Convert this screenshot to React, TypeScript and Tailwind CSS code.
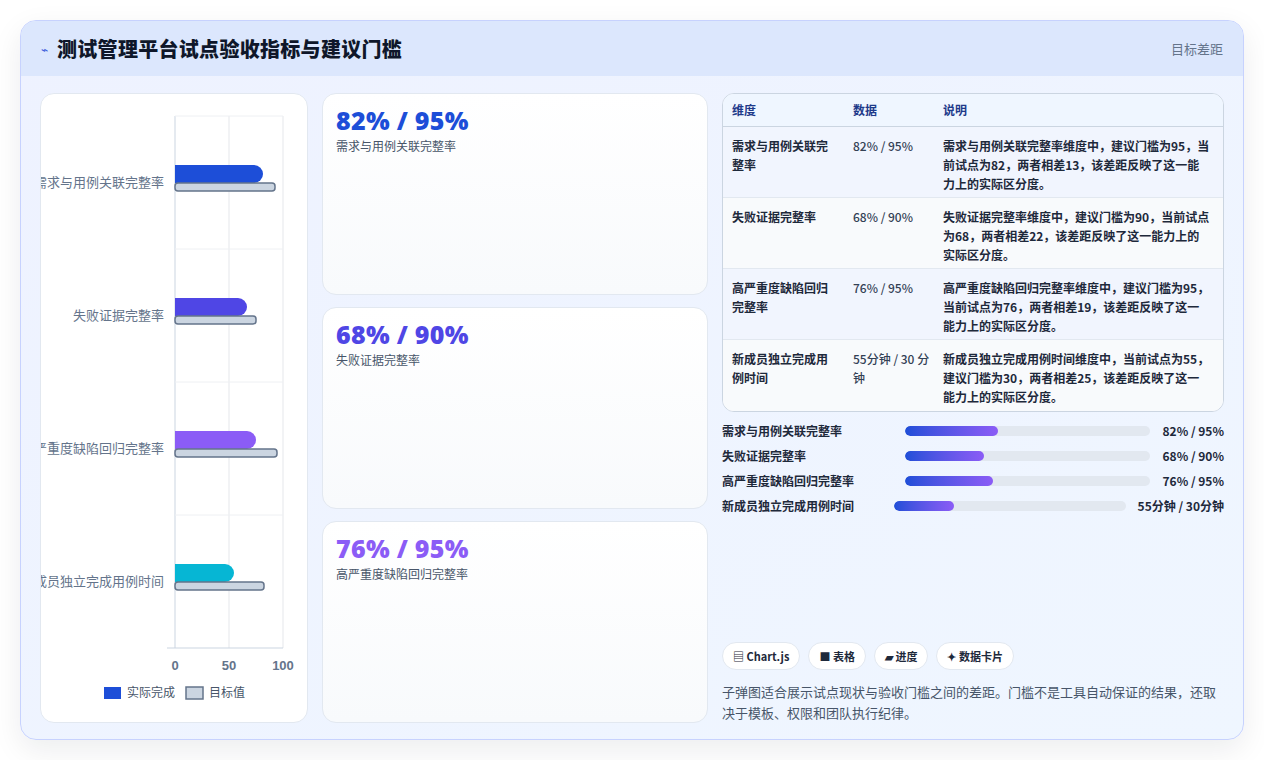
export default function App() {
  const f = { fontFamily: '"Noto Sans CJK SC","Noto Sans",sans-serif' };
  const cards = [
    { v: "82% / 95%", l: "需求与用例关联完整率", c: "text-[#1d4ed8]" },
    { v: "68% / 90%", l: "失败证据完整率", c: "text-[#4f46e5]" },
    { v: "76% / 95%", l: "高严重度缺陷回归完整率", c: "text-[#8b5cf6]" },
  ];
  const rows = [
    ["需求与用例关联完整率", "82% / 95%", "需求与用例关联完整率维度中，建议门槛为95，当前试点为82，两者相差13，该差距反映了这一能力上的实际区分度。"],
    ["失败证据完整率", "68% / 90%", "失败证据完整率维度中，建议门槛为90，当前试点为68，两者相差22，该差距反映了这一能力上的实际区分度。"],
    ["高严重度缺陷回归完整率", "76% / 95%", "高严重度缺陷回归完整率维度中，建议门槛为95，当前试点为76，两者相差19，该差距反映了这一能力上的实际区分度。"],
    ["新成员独立完成用例时间", "55分钟 / 30 分钟", "新成员独立完成用例时间维度中，当前试点为55，建议门槛为30，两者相差25，该差距反映了这一能力上的实际区分度。"],
  ];
  const prog = [
    ["需求与用例关联完整率", "82% / 95%", 38, "w-[171px]"],
    ["失败证据完整率", "68% / 90%", 32, "w-[171px]"],
    ["高严重度缺陷回归完整率", "76% / 95%", 36, "w-[171px]"],
    ["新成员独立完成用例时间", "55分钟 / 30分钟", 26, "w-[160px]"],
  ] as const;
  const bars = [
    { l: "需求与用例关联完整率", a: 262, t: 274, c: "#1d4ed8" },
    { l: "失败证据完整率", a: 246, t: 255, c: "#4f46e5" },
    { l: "高严重度缺陷回归完整率", a: 255, t: 276, c: "#8b5cf6" },
    { l: "新成员独立完成用例时间", a: 233, t: 263, c: "#06b6d4" },
  ];
  const ox = 40, oy = 93;
  return (
    <div className="w-[1264px] h-[760px] bg-white p-[20px] pr-[20px]" style={f}>
      <div className="w-[1224px] h-[720px] rounded-[16px] border border-[#c7d2fe] bg-gradient-to-br from-[#eef2ff] to-[#eff6ff] shadow-[0_10px_30px_rgba(15,23,42,0.08)] overflow-hidden flex flex-col">
        <div className="h-[55px] shrink-0 bg-[#dce7fd] flex items-center px-[20px] justify-between">
          <div className="flex items-center gap-[9px]">
            <span className="text-[#3b5bdb] text-[12px]">⌁</span>
            <span className="text-[20px] font-black text-[#0f172a] tracking-[0.3px]">测试管理平台试点验收指标与建议门槛</span>
          </div>
          <span className="text-[13px] text-[#64748b]">目标差距</span>
        </div>
        <div className="flex-1 flex gap-[14px] px-[19px] pt-[17px] pb-[18px]">
          <div className="w-[268px] shrink-0 bg-white rounded-[14px] border border-[#e2e8f0] overflow-hidden">
            <svg width="268" height="628" viewBox={`${ox} ${oy} 268 628`}>
              {[174, 228, 282].map((x) => (
                <line key={x} x1={x} x2={x} y1={115} y2={647} stroke={x === 174 ? "#cbd5e1" : "#e5e7eb"} />
              ))}
              {[115, 248, 381, 514].map((y) => (
                <line key={y} x1={174} x2={282} y1={y} y2={y} stroke="#eef0f3" />
              ))}
              <line x1={166} x2={282} y1={647} y2={647} stroke="#cbd5e1" />
              {bars.map((b, i) => {
                const cy = 181 + i * 133;
                return (
                  <g key={i}>
                    <text x={163} y={cy + 5} textAnchor="end" fontSize="13" fill="#64748b" style={f}>{b.l}</text>
                    <path d={`M174 ${cy - 17} H${b.a - 9} A9 9 0 0 1 ${b.a} ${cy - 8} A9 9 0 0 1 ${b.a - 9} ${cy + 1} H174 Z`} fill={b.c} />
                    <rect x={174} y={cy + 1} width={b.t - 174} height={8} rx={3} fill="#cbd5e1" stroke="#64748b" strokeWidth="1.5" />
                  </g>
                );
              })}
              {[[174, "0"], [228, "50"], [282, "100"]].map(([x, t]) => (
                <text key={t as string} x={x as number} y={669} textAnchor="middle" fontSize="13" fill="#64748b" fontWeight="bold" style={{ fontFamily: '"Liberation Sans",sans-serif' }}>{t}</text>
              ))}
              <rect x={103} y={686} width={17} height={12} fill="#1d4ed8" />
              <text x={126} y={696} fontSize="12" fill="#475569" style={f}>实际完成</text>
              <rect x={185} y={686} width={17} height={12} fill="#cbd5e1" stroke="#64748b" strokeWidth="1.5" />
              <text x={208} y={696} fontSize="12" fill="#475569" style={f}>目标值</text>
            </svg>
          </div>
          <div className="w-[386px] shrink-0 flex flex-col gap-[12px]">
            {cards.map((c) => (
              <div key={c.l} className="flex-1 rounded-[14px] border border-[#e2e8f0] bg-gradient-to-b from-white to-[#f8fafc] px-[13px] pt-[10px]">
                <div className={`text-[25px] font-black leading-[32px] tracking-[0.3px] ${c.c}`} style={{ fontFamily: '"Noto Sans",sans-serif' }}>{c.v}</div>
                <div className="text-[12px] text-[#475569] mt-[1px]">{c.l}</div>
              </div>
            ))}
          </div>
          <div className="flex-1 flex flex-col min-w-0">
            <div className="rounded-[12px] border border-[#cbd5e1] overflow-hidden bg-white">
              <div className="h-[33px] bg-[#eff6ff] border-b border-[#cbd5e1] flex items-center text-[12px] font-bold text-[#1e3a8a]">
                <div className="w-[130px] pl-[9px]">维度</div>
                <div className="w-[90px]">数据</div>
                <div>说明</div>
              </div>
              {rows.map((r, i) => (
                <div key={i} className={`h-[71px] flex pt-[9px] text-[12px] leading-[19px] text-[#1e293b] ${i < 3 ? "border-b border-[#e2e8f0]" : ""} ${i % 2 === 0 ? "bg-[#f1f5fe]" : "bg-[#f8fafc]"}`}>
                  <div className="w-[130px] pl-[9px] pr-[20px] font-bold">{r[0]}</div>
                  <div className="w-[90px] pr-[10px] text-[#334155] font-medium">{r[1]}</div>
                  <div className="flex-1 pr-[12px] font-bold">{r[2]}</div>
                </div>
              ))}
            </div>
            <div className="flex flex-col gap-[8px] mt-[10px]">
              {prog.map(([l, v, p, w]) => (
                <div key={l} className="flex items-center gap-[12px] h-[17px]">
                  <div className={`${w} shrink-0 text-[12px] font-bold text-[#1e293b] whitespace-nowrap`}>{l}</div>
                  <div className="flex-1 h-[10px] rounded-full bg-[#e2e8f0] overflow-hidden">
                    <div className="h-full rounded-full bg-gradient-to-r from-[#1d4ed8] to-[#8b5cf6]" style={{ width: `${p}%` }} />
                  </div>
                  <div className="shrink-0 text-[12px] font-bold text-[#1e293b]">{v}</div>
                </div>
              ))}
            </div>
            <div className="flex-1" />
            <div className="flex gap-[8px]">
              {["▤ Chart.js", "■ 表格", "▰ 进度", "✦ 数据卡片"].map((t) => (
                <div key={t} className="h-[28px] px-[10px] rounded-full bg-white border border-[#e2e8f0] flex items-center text-[11px] font-bold text-[#1e293b]">{t}</div>
              ))}
            </div>
            <div className="mt-[11px] text-[13px] leading-[21px] text-[#475569]">子弹图适合展示试点现状与验收门槛之间的差距。门槛不是工具自动保证的结果，还取决于模板、权限和团队执行纪律。</div>
          </div>
        </div>
      </div>
    </div>
  );
}
